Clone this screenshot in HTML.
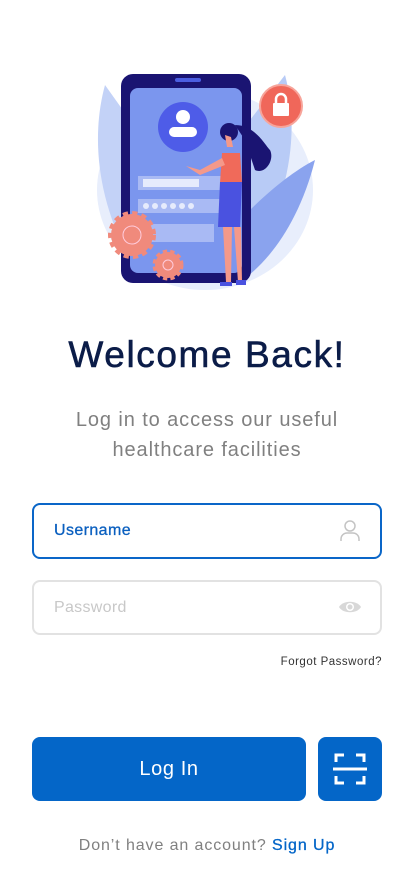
<!DOCTYPE html>
<html><head><meta charset="utf-8"><style>
*{margin:0;padding:0;box-sizing:border-box}
body{width:414px;height:896px;background:#fff;font-family:"Liberation Sans",sans-serif;position:relative;overflow:hidden}
.abs{position:absolute}
h1{position:absolute;top:334px;left:0;width:414px;text-align:center;font-size:37px;font-weight:normal;color:#0b1c48;letter-spacing:1.6px;-webkit-text-stroke:0.6px #0b1c48}
.sub{position:absolute;top:405px;left:0;width:414px;text-align:center;font-size:20px;line-height:30px;color:#808080;letter-spacing:0.9px}
.field{position:absolute;left:32px;width:350px;border-radius:8px;font-size:16px;padding-left:20px;display:flex;align-items:center}
.f1{top:503px;height:56px;border:2px solid #0a66c8;color:#0a5fbf;letter-spacing:0.4px;-webkit-text-stroke:0.3px #0a5fbf}
.f2{top:580px;height:55px;border:2px solid #e2e2e2;color:#c8c8c8;letter-spacing:0.3px}
.forgot{position:absolute;top:656px;right:32px;font-size:11.5px;color:#333;letter-spacing:0.5px}
.btn{position:absolute;top:737px;left:32px;width:274px;height:64px;background:#0466c8;border-radius:8px;color:#fff;font-size:20px;display:flex;align-items:center;justify-content:center;letter-spacing:0.6px}
.scan{position:absolute;top:737px;left:318px;width:64px;height:64px;background:#0466c8;border-radius:8px}
.bottom{position:absolute;top:837px;left:0;width:414px;text-align:center;font-size:16px;color:#808080;letter-spacing:0.9px}
.bottom b{color:#0466c8;font-weight:normal;-webkit-text-stroke:0.3px #0466c8}
</style></head><body>
<svg class="abs" style="left:0;top:0" width="414" height="300" viewBox="0 0 414 300">
<ellipse cx="205" cy="190" rx="108" ry="100" fill="#e8eefc"/>
<path d="M105 85 C90 140 100 200 125 250 L130 120 Z" fill="#c3d2f7"/>
<path d="M285 75 C300 130 290 200 250 260 L250 120 Z" fill="#b8cbf6"/>
<path d="M315 160 C300 220 270 260 245 278 L250 210 C270 190 295 170 315 160 Z" fill="#8aa3ee"/>
<rect x="121" y="74" width="130" height="209" rx="12" fill="#1a1472"/>
<rect x="130" y="88" width="112" height="185" rx="8" fill="#7b96ee"/>
<rect x="175" y="78" width="26" height="4" rx="2" fill="#4b5ee0"/>
<circle cx="183" cy="127" r="25" fill="#4e5ce8"/>
<circle cx="183" cy="117" r="7" fill="#fff"/>
<rect x="169" y="127" width="28" height="10" rx="5" fill="#fff"/>
<rect x="138" y="176" width="96" height="14" fill="#a9baf4"/>
<rect x="143" y="179" width="56" height="8" fill="#e6ebfc"/>
<rect x="138" y="199" width="96" height="14" fill="#a9baf4"/>
<g fill="#e6ebfc"><circle cx="146" cy="206" r="3"/><circle cx="155" cy="206" r="3"/><circle cx="164" cy="206" r="3"/><circle cx="173" cy="206" r="3"/><circle cx="182" cy="206" r="3"/><circle cx="191" cy="206" r="3"/></g>
<rect x="138" y="224" width="76" height="18" fill="#a9baf4"/>
<circle cx="132" cy="235" r="21" fill="#f08a7c" stroke="#f08a7c" stroke-width="6" stroke-dasharray="5 4"/>
<circle cx="132" cy="235" r="9" fill="none" stroke="#fcd" stroke-width="1"/>
<circle cx="168" cy="265" r="13" fill="#f08a7c" stroke="#f08a7c" stroke-width="5" stroke-dasharray="4 3"/>
<circle cx="168" cy="265" r="5" fill="none" stroke="#fcd" stroke-width="1"/>
<circle cx="281" cy="106" r="21" fill="#f0675a" stroke="#f7a49a" stroke-width="2"/>
<rect x="273" y="103" width="16" height="13" rx="1" fill="#fff"/>
<path d="M276 103 v-4 a5 5 0 0 1 10 0 v4" fill="none" stroke="#fff" stroke-width="2.5"/>
<path d="M235 125 C255 125 265 145 270 150 C275 160 265 175 255 170 L245 140 Z" fill="#1a1472"/>
<circle cx="229" cy="132" r="9" fill="#1a1472"/>
<path d="M225 135 l2 12 h6 l-2 -10 Z" fill="#f4998a"/>
<path d="M222 153 h18 l2 30 h-22 Z" fill="#f06a5a"/>
<path d="M222 158 L200 170 L186 166 L200 175 L225 165 Z" fill="#f4998a"/>
<path d="M220 182 h22 l-2 45 h-22 Z" fill="#4a52e0"/>
<path d="M223 227 l3 55 h5 l1 -55 Z M234 227 l4 55 h4 l-1 -55 Z" fill="#f4998a"/>
<path d="M220 282 h12 v4 h-12 Z M236 280 h10 v5 h-10 Z" fill="#4a52e0"/>
</svg>
<h1>Welcome Back!</h1>
<div class="sub">Log in to access our useful<br>healthcare facilities</div>
<div class="field f1">Username</div>
<svg class="abs" style="left:338px;top:518px" width="24" height="24" viewBox="0 0 24 24" fill="none" stroke="#c4c4c4" stroke-width="1.5"><circle cx="12" cy="8" r="5"/><path d="M3 23 v-2 a6 6 0 0 1 6 -6 h6 a6 6 0 0 1 6 6 v2"/></svg>
<div class="field f2">Password</div>
<svg class="abs" style="left:338px;top:597px" width="24" height="20" viewBox="0 0 24 20"><path d="M1 10 C5 3 19 3 23 10 C19 17 5 17 1 10 Z" fill="#d8d8d8"/><circle cx="12" cy="10" r="4" fill="#fff"/><circle cx="12" cy="10" r="2.5" fill="#d8d8d8"/></svg>
<div class="forgot">Forgot Password?</div>
<div class="btn">Log In</div>
<div class="scan"><svg width="64" height="64" viewBox="0 0 64 64" fill="none" stroke="#fff" stroke-width="3"><path d="M18 25 v-7 h8 M38 18 h8 v7 M18 39 v7 h8 M38 46 h8 v-7"/><path d="M15 32 h34"/></svg></div>
<div class="bottom">Don’t have an account? <b>Sign Up</b></div>
</body></html>
